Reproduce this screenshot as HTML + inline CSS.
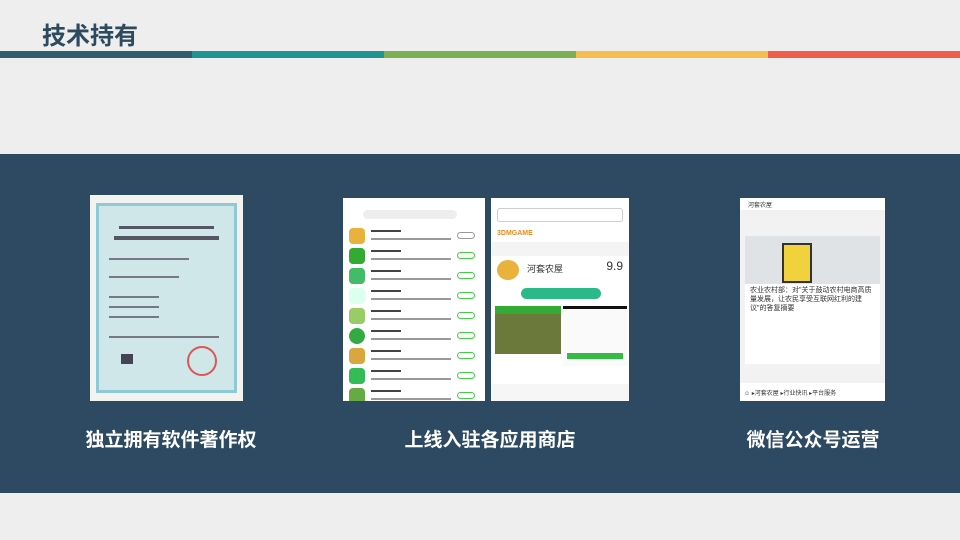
<!DOCTYPE html>
<html><head><meta charset="utf-8"><style>
*{margin:0;padding:0;box-sizing:border-box}
body{width:960px;height:540px;background:#eeeeee;position:relative;overflow:hidden;font-family:"Liberation Sans","Noto Sans CJK SC",sans-serif}
.title{position:absolute;left:42px;top:16px;font-size:24px;font-weight:bold;color:#2d4a5e;letter-spacing:0px}
.bar{position:absolute;top:51px;height:7px;width:192px}
.band{position:absolute;left:0;top:154px;width:960px;height:339px;background:#2e4a62}
.cap{position:absolute;top:425px;color:#fff;font-size:19px;font-weight:bold;text-align:center;width:260px}
.img{position:absolute;background:#fff;overflow:hidden}
.row{position:absolute;left:6px;width:130px;height:18px}
.ic{position:absolute;left:0;top:0;width:16px;height:16px;border-radius:4px}
.ln{position:absolute;left:22px;height:2px;background:#999}
.btn{position:absolute;right:4px;top:4px;width:18px;height:7px;border:1px solid #4c4;border-radius:4px}
</style></head><body>
<div class="title">技术持有</div>
<div class="bar" style="left:0;background:#2e5d6e"></div>
<div class="bar" style="left:192px;background:#1f9490"></div>
<div class="bar" style="left:384px;background:#7ab051"></div>
<div class="bar" style="left:576px;background:#f6be4f"></div>
<div class="bar" style="left:768px;background:#f25c4b;width:192px"></div>
<div class="band"></div>

<!-- certificate -->
<div class="img" style="left:90px;top:195px;width:153px;height:206px;background:#f2f2ee">
 <div style="position:absolute;left:6px;top:8px;width:141px;height:190px;background:#cfe7e8;border:3px solid #8fc9d6">
  <div style="position:absolute;left:20px;top:20px;width:95px;height:3px;background:#556"></div>
  <div style="position:absolute;left:15px;top:30px;width:105px;height:4px;background:#556"></div>
  <div style="position:absolute;left:10px;top:52px;width:80px;height:2px;background:#778"></div>
  <div style="position:absolute;left:10px;top:70px;width:70px;height:2px;background:#778"></div>
  <div style="position:absolute;left:10px;top:90px;width:50px;height:2px;background:#778"></div>
  <div style="position:absolute;left:10px;top:100px;width:50px;height:2px;background:#778"></div>
  <div style="position:absolute;left:10px;top:110px;width:50px;height:2px;background:#778"></div>
  <div style="position:absolute;left:10px;top:130px;width:110px;height:2px;background:#778"></div>
  <div style="position:absolute;left:22px;top:148px;width:12px;height:10px;background:#445"></div>
  <div style="position:absolute;left:88px;top:140px;width:30px;height:30px;border:2px solid #d55;border-radius:50%"></div>
 </div>
</div>

<!-- phone 1 -->
<div class="img" style="left:343px;top:198px;width:142px;height:203px">
 <div style="position:absolute;left:20px;top:12px;width:94px;height:9px;background:#eee;border-radius:5px"></div>
 <div class="row" style="top:30px"><div class="ic" style="background:#e9b23c"></div><div class="ln" style="top:2px;width:30px;background:#444"></div><div class="ln" style="top:10px;width:80px"></div><div class="btn" style="border-color:#999"></div></div>
 <div class="row" style="top:50px"><div class="ic" style="background:#3a3"></div><div class="ln" style="top:2px;width:30px;background:#444"></div><div class="ln" style="top:10px;width:80px"></div><div class="btn"></div></div>
 <div class="row" style="top:70px"><div class="ic" style="background:#4b6"></div><div class="ln" style="top:2px;width:30px;background:#444"></div><div class="ln" style="top:10px;width:80px"></div><div class="btn"></div></div>
 <div class="row" style="top:90px"><div class="ic" style="background:#dfe"></div><div class="ln" style="top:2px;width:30px;background:#444"></div><div class="ln" style="top:10px;width:80px"></div><div class="btn"></div></div>
 <div class="row" style="top:110px"><div class="ic" style="background:#9c6"></div><div class="ln" style="top:2px;width:30px;background:#444"></div><div class="ln" style="top:10px;width:80px"></div><div class="btn"></div></div>
 <div class="row" style="top:130px"><div class="ic" style="background:#3a4;border-radius:50%"></div><div class="ln" style="top:2px;width:30px;background:#444"></div><div class="ln" style="top:10px;width:80px"></div><div class="btn"></div></div>
 <div class="row" style="top:150px"><div class="ic" style="background:#d9a640"></div><div class="ln" style="top:2px;width:30px;background:#444"></div><div class="ln" style="top:10px;width:80px"></div><div class="btn"></div></div>
 <div class="row" style="top:170px"><div class="ic" style="background:#3b5"></div><div class="ln" style="top:2px;width:30px;background:#444"></div><div class="ln" style="top:10px;width:80px"></div><div class="btn"></div></div>
 <div class="row" style="top:190px"><div class="ic" style="background:#6a4"></div><div class="ln" style="top:2px;width:30px;background:#444"></div><div class="ln" style="top:10px;width:80px"></div><div class="btn"></div></div>
</div>

<!-- phone 2 -->
<div class="img" style="left:491px;top:198px;width:138px;height:203px">
 <div style="position:absolute;left:6px;top:10px;width:126px;height:14px;border:1px solid #ccc;border-radius:3px"></div>
 <div style="position:absolute;left:6px;top:32px;font-size:7px;color:#e88a1a;font-weight:bold">3DMGAME</div>
 <div style="position:absolute;left:0;top:44px;width:138px;height:14px;background:#f4f4f4"></div>
 <div style="position:absolute;left:6px;top:62px;width:22px;height:20px;background:#e9b23c;border-radius:50%"></div>
 <div style="position:absolute;left:36px;top:64px;font-size:9px;color:#333">河套农屋</div>
 <div style="position:absolute;right:6px;top:61px;font-size:12px;color:#333">9.9</div>
 <div style="position:absolute;left:30px;top:90px;width:80px;height:11px;background:#2bb98a;border-radius:6px"></div>
 <div style="position:absolute;left:4px;top:108px;width:66px;height:48px;background:#6b7a3a"></div>
 <div style="position:absolute;left:4px;top:108px;width:66px;height:8px;background:#3a3"></div>
 <div style="position:absolute;left:72px;top:108px;width:64px;height:60px;background:#fafafa;border-top:3px solid #111"></div>
 <div style="position:absolute;left:76px;top:155px;width:56px;height:6px;background:#3b4"></div>
 <div style="position:absolute;left:0;top:186px;width:138px;height:17px;background:#f6f6f6"></div>
</div>

<!-- wechat -->
<div class="img" style="left:740px;top:198px;width:145px;height:203px;background:#f2f2f2">
 <div style="position:absolute;left:0;top:0;width:145px;height:12px;background:#fff;font-size:6px;color:#333;padding:2px 8px">河套农屋</div>
 <div style="position:absolute;left:5px;top:38px;width:135px;height:48px;background:#dfe3e6"></div>
 <div style="position:absolute;left:42px;top:45px;width:30px;height:40px;background:#f2d23c;border:2px solid #333"></div>
 <div style="position:absolute;left:5px;top:86px;width:135px;height:80px;background:#fff"></div>
 <div style="position:absolute;left:10px;top:88px;width:125px;font-size:7px;line-height:9px;color:#333">农业农村部：对"关于鼓动农村电商高质量发展，让农民享受互联网红利的建议"的答复摘要</div>
 <div style="position:absolute;left:0;top:185px;width:145px;height:18px;background:#fff;font-size:6px;color:#333;padding:5px 4px">☺ ▸河套农屋 ▸行业快讯 ▸平台服务</div>
</div>

<div class="cap" style="left:41px">独立拥有软件著作权</div>
<div class="cap" style="left:360px">上线入驻各应用商店</div>
<div class="cap" style="left:683px">微信公众号运营</div>
</body></html>
